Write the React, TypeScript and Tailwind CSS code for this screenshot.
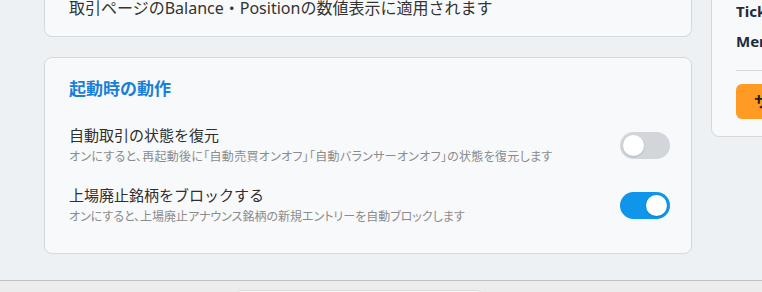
import React from "react";

const font = "font-['Noto_Sans','Noto_Sans_CJK_JP',sans-serif]";

const Toggle = ({ on }: { on?: boolean }) => {
  return (
    <div
      className={
        on
          ? "flex h-[27px] w-[50px] shrink-0 items-center justify-end rounded-full bg-[#0f95ea] px-[3px]"
          : "flex h-[27px] w-[50px] shrink-0 items-center justify-start rounded-full bg-[#d2d6da] px-[3px]"
      }
    >
      <div className="h-[21px] w-[21px] rounded-full bg-white shadow-[0_1px_2px_rgba(0,0,0,0.15)]" />
    </div>
  );
};

const SettingRow = ({
  title,
  description,
  on,
  wide,
}: {
  title: string;
  description: string;
  on?: boolean;
  wide?: boolean;
}) => {
  return (
    <div className="flex items-center justify-between">
      <div className="flex flex-col gap-[2px]">
        <p className="text-[15px] leading-[22px] text-[#2e2e2e]">{title}</p>
        <p
          className={
            wide
              ? "text-[12px] leading-[18px] tracking-[0.3px] text-[#8b8b8b] [font-feature-settings:'palt']"
              : "text-[12px] leading-[18px] text-[#8b8b8b] [font-feature-settings:'palt']"
          }
        >
          {description}
        </p>
      </div>
      <Toggle on={on} />
    </div>
  );
};

export default function App() {
  return (
    <div className={`flex h-[292px] w-full flex-col overflow-hidden bg-[#edf1f4] ${font}`}>
      <div className="flex h-[280px] shrink-0 items-start gap-[19px] pl-[44px]">
        {/* main column */}
        <div className="flex w-[648px] shrink-0 flex-col gap-5">
          <div className="-mt-1 rounded-b-lg border border-t-0 border-[#d4d9de] bg-[#f8f9fa] px-6 pb-4">
            <p className="text-[16px] leading-6 text-[#333]">
              取引ページのBalance・Positionの数値表示に適用されます
            </p>
          </div>

          <div className="rounded-lg border border-[#d4d9de] bg-[#f8f9fa] pt-[19px] pr-[21px] pb-[27px] pl-6">
            <h3 className="text-[17px] leading-6 font-bold text-[#1a7fd6]">起動時の動作</h3>
            <div className="mt-[23px] flex flex-col gap-[18px]">
              <SettingRow
                title="自動取引の状態を復元"
                description="オンにすると、再起動後に「自動売買オンオフ」「自動バランサーオンオフ」の状態を復元します"
                wide
              />
              <SettingRow
                title="上場廃止銘柄をブロックする"
                description="オンにすると、上場廃止アナウンス銘柄の新規エントリーを自動ブロックします"
                on
              />
            </div>
          </div>
        </div>

        {/* sidebar */}
        <div className="w-[260px] shrink-0 rounded-b-lg border border-t-0 border-[#d4d9de] bg-[#f8f9fa] px-6 pb-[17px]">
          <div className="-mt-1 flex flex-col">
            <p className="text-[15px] leading-[30px] font-bold text-[#1f2a3c]">Ticker Size</p>
            <p className="text-[15px] leading-[30px] font-bold text-[#1f2a3c]">Merge Orders</p>
          </div>
          <div className="mt-[14px] border-t border-[#d4d9de]" />
          <button className="mt-[13px] flex h-[35px] w-full items-center rounded-md bg-[#ff9b22] pl-[18px] text-[15px] font-bold text-[#222]">
            サーバーに保存
          </button>
        </div>
      </div>

      {/* bottom bar */}
      <div className="flex-1 border-t border-[#bfc2c5] bg-[#ececec] pt-[9px] pl-[235px]">
        <div className="h-8 w-[248px] rounded-md border border-[#dcdcdc] bg-[#f7f7f7]" />
      </div>
    </div>
  );
}
